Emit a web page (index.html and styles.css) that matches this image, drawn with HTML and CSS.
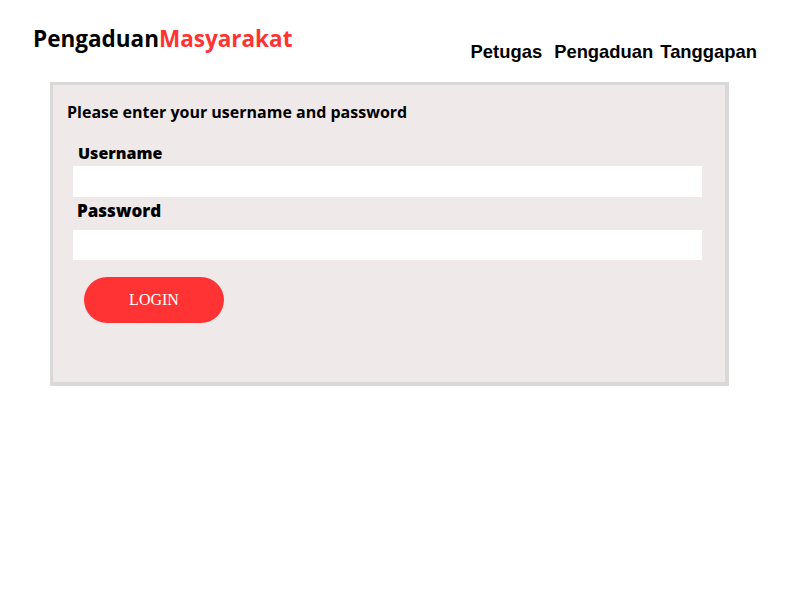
FILE: index.html
```html
<!DOCTYPE html>
<html lang="id">
<head>
<meta charset="utf-8">
<title>Pengaduan Masyarakat</title>
<link rel="stylesheet" href="styles.css">
</head>
<body>
<header class="topbar">
  <h1 class="brand">Pengaduan<span class="brand-accent">Masyarakat</span></h1>
  <nav class="nav">
    <a class="nav-link" href="#">Petugas</a>
    <a class="nav-link nav-link-wide" href="#">Pengaduan</a>
    <a class="nav-link" href="#">Tanggapan</a>
  </nav>
</header>
<main class="panel">
  <h2 class="panel-title">Please enter your username and password</h2>
  <form class="login-form">
    <label class="field-label" for="username">Username</label>
    <input class="field-input" id="username" type="text">
    <label class="field-label field-label-2" for="password">Password</label>
    <input class="field-input field-input-2" id="password" type="password">
    <button class="login-btn" type="button">LOGIN</button>
  </form>
</main>
</body>
</html>
```
FILE: styles.css
```css
* { box-sizing: border-box; }
html, body { margin: 0; padding: 0; background: #ffffff; }
body {
  font-family: "Open Sans", "Noto Sans", sans-serif;
  color: #000;
}
.topbar {
  display: flex;
  justify-content: space-between;
  align-items: flex-start;
  padding: 23px 43px 0 33px;
  height: 82px;
}
.brand {
  margin: 0;
  font-size: 22.5px;
  font-weight: 700;
  line-height: 32px;
  letter-spacing: 0;
}
.brand-accent { color: #ff3333; }
.nav {
  display: flex;
  margin-top: 17px;
}
.nav-link {
  font-family: "Liberation Sans", Arial, sans-serif;
  font-weight: 700;
  font-size: 18.4px;
  line-height: 24px;
  color: #000;
  text-decoration: none;
}
.nav-link-wide { margin: 0 7px 0 12px; }
.panel {
  margin-left: 50px;
  width: 679px;
  height: 304px;
  background: #efe9e9;
  border-style: solid;
  border-color: #d9d9d9;
  border-width: 3px 4px 4px 3px;
  padding: 17px 23px 0 14px;
}
.panel-title {
  margin: 0;
  font-size: 16px;
  font-weight: 700;
  line-height: 20px;
}
.login-form {
  display: flex;
  flex-direction: column;
  align-items: flex-start;
  padding-left: 6px;
  margin-top: 21px;
}
.field-label {
  font-size: 16px;
  font-weight: 800;
  line-height: 20px;
  padding-left: 5px;
}
.field-label-2 { margin-top: 4px; padding-left: 4px; font-size: 17px; }
.field-input {
  display: block;
  width: 629px;
  height: 31px;
  margin-top: 3px;
  border: none;
  background: #ffffff;
  outline: none;
  padding: 0 8px;
}
.field-input-2 { height: 30px; margin-top: 9px; }
.login-btn {
  margin: 17px 0 0 11px;
  width: 140px;
  height: 46px;
  border: none;
  border-radius: 23px;
  background: #ff3333;
  color: #ffffff;
  font-family: "Liberation Serif", "Times New Roman", serif;
  font-size: 16px;
  padding: 0;
  cursor: pointer;
}
```
